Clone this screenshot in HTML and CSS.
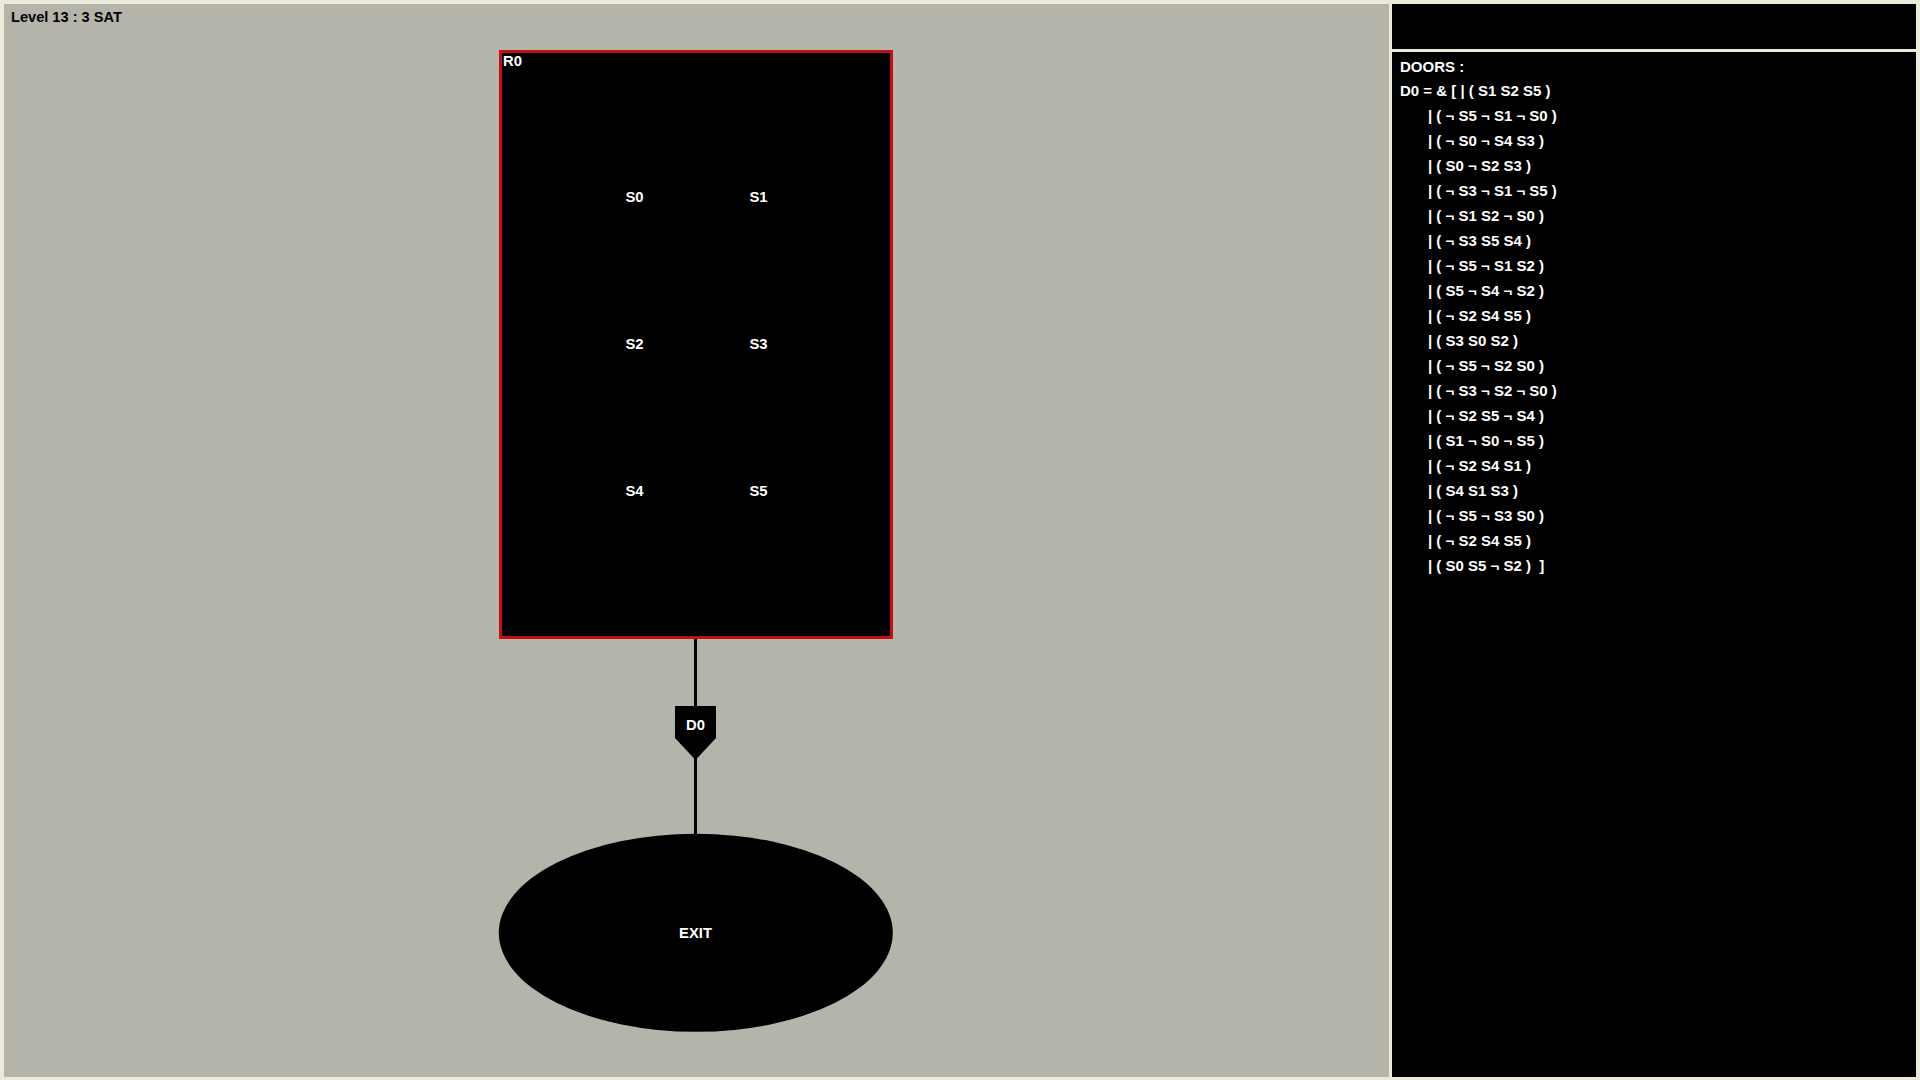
FILE: index.html
```html
<!DOCTYPE html>
<html lang="en">
<head>
<meta charset="utf-8">
<title>Level 13 : 3 SAT</title>
<link rel="stylesheet" href="styles.css">
</head>
<body>
<div class="app">
  <main class="canvas">
    <div class="level">Level 13 : 3 SAT</div>
    <svg class="diagram" width="1385" height="1073" viewBox="0 0 1385 1073">
      <line class="wire" x1="691.5" y1="635" x2="691.5" y2="703"></line>
      <line class="wire" x1="691.5" y1="752" x2="691.5" y2="832"></line>
      <rect class="room" x="496.5" y="47.5" width="391" height="586"></rect>
      <text class="lbl" x="499" y="62">R0</text>
      <text class="lbl mid" x="630.5" y="198">S0</text>
      <text class="lbl mid" x="754.5" y="198">S1</text>
      <text class="lbl mid" x="630.5" y="345">S2</text>
      <text class="lbl mid" x="754.5" y="345">S3</text>
      <text class="lbl mid" x="630.5" y="492">S4</text>
      <text class="lbl mid" x="754.5" y="492">S5</text>
      <polygon class="door" points="671,702 712,702 712,734 691.5,756 671,734"></polygon>
      <text class="lbl mid" x="691.5" y="726">D0</text>
      <ellipse class="exit" cx="691.8" cy="928.8" rx="197" ry="99"></ellipse>
      <text class="lbl mid" x="691.5" y="934">EXIT</text>
    </svg>
  </main>
  <aside class="side">
    <div class="side-top"></div>
    <div class="side-body">
      <div class="doors-title">DOORS :</div>
      <div class="formula">D0 = &amp; [ | ( S1 S2 S5 )</div>
      <ul class="clauses">
        <li>| ( ¬ S5 ¬ S1 ¬ S0 )</li>
        <li>| ( ¬ S0 ¬ S4 S3 )</li>
        <li>| ( S0 ¬ S2 S3 )</li>
        <li>| ( ¬ S3 ¬ S1 ¬ S5 )</li>
        <li>| ( ¬ S1 S2 ¬ S0 )</li>
        <li>| ( ¬ S3 S5 S4 )</li>
        <li>| ( ¬ S5 ¬ S1 S2 )</li>
        <li>| ( S5 ¬ S4 ¬ S2 )</li>
        <li>| ( ¬ S2 S4 S5 )</li>
        <li>| ( S3 S0 S2 )</li>
        <li>| ( ¬ S5 ¬ S2 S0 )</li>
        <li>| ( ¬ S3 ¬ S2 ¬ S0 )</li>
        <li>| ( ¬ S2 S5 ¬ S4 )</li>
        <li>| ( S1 ¬ S0 ¬ S5 )</li>
        <li>| ( ¬ S2 S4 S1 )</li>
        <li>| ( S4 S1 S3 )</li>
        <li>| ( ¬ S5 ¬ S3 S0 )</li>
        <li>| ( ¬ S2 S4 S5 )</li>
        <li>| ( S0 S5 ¬ S2 )&nbsp; ]</li>
      </ul>
    </div>
  </aside>
</div>
</body>
</html>
```
FILE: styles.css
```css
* { box-sizing: border-box; }
html, body {
  margin: 0;
  height: 100%;
}
body {
  background: #ebeadb;
  font-family: "Liberation Sans", Arial, sans-serif;
  font-weight: bold;
  font-size: 15px;
  overflow: hidden;
}
.app {
  display: flex;
  gap: 3px;
  height: 1080px;
  padding: 4px 4px 3px 4px;
}
.canvas {
  position: relative;
  width: 1385px;
  flex: none;
  background: #b4b4aa;
}
.level {
  position: relative;
  z-index: 1;
  padding: 5px 0 0 7px;
  color: #000;
  font-size: 14.6px;
  line-height: 16px;
}
.diagram {
  position: absolute;
  left: 0;
  top: 0;
  display: block;
}
.wire {
  stroke: #000;
  stroke-width: 3;
}
.room {
  fill: #000;
  stroke: #c20f0f;
  stroke-width: 3;
}
.door, .exit {
  fill: #000;
}
.lbl {
  fill: #fff;
  font-family: "Liberation Sans", Arial, sans-serif;
  font-weight: bold;
  font-size: 14.8px;
}
.mid {
  text-anchor: middle;
}
.side {
  flex: 1;
  display: flex;
  flex-direction: column;
  gap: 3px;
}
.side-top {
  height: 45px;
  background: #000;
  flex: none;
}
.side-body {
  flex: 1;
  background: #000;
  color: #fff;
  padding: 3px 0 0 8px;
}
.doors-title {
  line-height: 23px;
}
.formula {
  line-height: 25px;
}
.clauses {
  list-style: none;
  margin: 0;
  padding: 0 0 0 28px;
}
.clauses li {
  line-height: 25px;
}
```
